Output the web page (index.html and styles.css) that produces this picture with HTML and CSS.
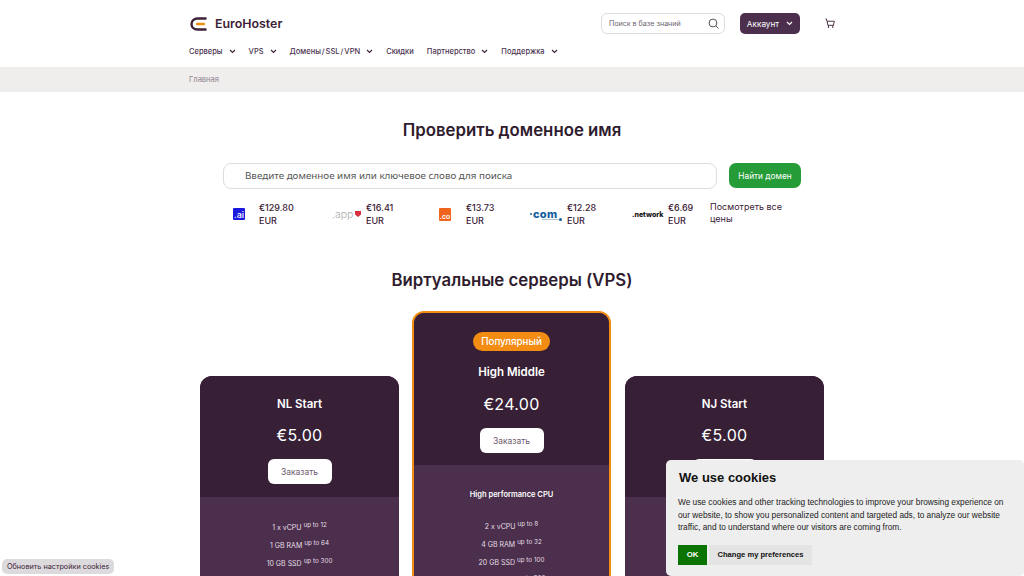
FILE: index.html
```html
<!DOCTYPE html>
<html lang="ru">
<head>
  <meta charset="UTF-8">
  <meta name="viewport" content="width=device-width, initial-scale=1.0">
  <title>EuroHoster</title>
  <link rel="stylesheet" href="styles.css">
</head>
<body>
  <header class="header">
    <div class="top-row">
      <a class="logo">
        <svg class="logo-icon" width="18" height="14" viewBox="0 0 18 14">
          <path d="M16.500 1.500H7.500C4 1.500 1.500 3.800 1.500 7C1.500 10.200 4 12.500 7.500 12.500H16.500" fill="none" stroke="#3c2238" stroke-width="2.400"/>
          <rect x="6" y="5.800" width="9" height="2.500" rx="1" fill="#f28c13"/>
        </svg>
        <span class="logo-text">EuroHoster</span>
      </a>
      <div class="top-actions">
        <div class="kb-search">
          <span>Поиск в базе знаний</span>
          <svg width="11" height="11" viewBox="0 0 11 11" fill="none" stroke="#555" stroke-width="1">
            <circle cx="5" cy="5" r="3.900"/>
            <path d="M8 8l2.500 2.500"/>
          </svg>
        </div>
        <button class="account-btn">Аккаунт
          <svg class="chev" width="7" height="5" viewBox="0 0 7 5" fill="none" stroke="#fff" stroke-width="1.100"><path d="M1 1l2.500 2.500L6 1"/></svg>
        </button>
        <svg class="cart" width="10" height="11" viewBox="0 0 11 11" fill="none" stroke="#3c2238" stroke-width="1">
          <path d="M0.500 0.500H1.500L2.200 3H10.300L9.200 7.500H3.200L2.200 3"/>
          <path d="M3.800 7.500V10.500M8.600 7.500V10.500"/>
        </svg>
      </div>
    </div>
    <nav class="nav">
      <a>Серверы <svg class="chev" width="7" height="5" viewBox="0 0 7 5" fill="none" stroke="#3c2238" stroke-width="1.100"><path d="M1 1l2.500 2.500L6 1"/></svg></a>
      <a>VPS <svg class="chev" width="7" height="5" viewBox="0 0 7 5" fill="none" stroke="#3c2238" stroke-width="1.100"><path d="M1 1l2.500 2.500L6 1"/></svg></a>
      <a>Домены / SSL / VPN <svg class="chev" width="7" height="5" viewBox="0 0 7 5" fill="none" stroke="#3c2238" stroke-width="1.100"><path d="M1 1l2.500 2.500L6 1"/></svg></a>
      <a>Скидки</a>
      <a>Партнерство <svg class="chev" width="7" height="5" viewBox="0 0 7 5" fill="none" stroke="#3c2238" stroke-width="1.100"><path d="M1 1l2.500 2.500L6 1"/></svg></a>
      <a>Поддержка <svg class="chev" width="7" height="5" viewBox="0 0 7 5" fill="none" stroke="#3c2238" stroke-width="1.100"><path d="M1 1l2.500 2.500L6 1"/></svg></a>
    </nav>
  </header>

  <div class="breadcrumb"><div class="breadcrumb-inner">Главная</div></div>

  <section class="domain">
    <h1>Проверить доменное имя</h1>
    <div class="domain-form">
      <div class="domain-input">Введите доменное имя или ключевое слово для поиска</div>
      <button class="domain-btn">Найти домен</button>
    </div>
    <div class="tlds">
      <div class="tld tld-ai">
        <span class="tld-logo"><span class="ai-box">.ai</span></span>
        <span class="tld-price">€129.80<br>EUR</span>
      </div>
      <div class="tld tld-app">
        <span class="tld-logo">
          <span class="app-text">.app</span>
          <svg class="app-mark" width="6" height="6" viewBox="0 0 6 6"><path d="M0 0H6V3.500L3 6L0 3.500Z" fill="#d8303c"/></svg>
        </span>
        <span class="tld-price">€16.41<br>EUR</span>
      </div>
      <div class="tld tld-co">
        <span class="tld-logo"><span class="co-box">.co</span></span>
        <span class="tld-price">€13.73<br>EUR</span>
      </div>
      <div class="tld tld-com">
        <span class="tld-logo com-logo">
          <span class="com-dot"></span>
          <span class="com-text">com</span>
          <span class="com-line"></span>
        </span>
        <span class="tld-price">€12.28<br>EUR</span>
      </div>
      <div class="tld tld-network">
        <span class="tld-logo"><span class="network-text">.network</span></span>
        <span class="tld-price">€6.69<br>EUR</span>
      </div>
      <a class="tld-all">Посмотреть все цены</a>
    </div>
  </section>

  <section class="vps">
    <h2>Виртуальные серверы (VPS)</h2>
    <div class="cards">
      <div class="card">
        <div class="card-head">
          <h3>NL Start</h3>
          <div class="price">€5.00</div>
          <button class="order-btn">Заказать</button>
        </div>
        <div class="card-body">
          <p>1 x vCPU <sup>up to 12</sup></p>
          <p>1 GB RAM <sup>up to 64</sup></p>
          <p>10 GB SSD <sup>up to 300</sup></p>
          <p>1 TB Traffic <sup>up to 300</sup></p>
        </div>
      </div>
      <div class="card card-popular">
        <div class="card-head">
          <span class="badge">Популярный</span>
          <h3>High Middle</h3>
          <div class="price">€24.00</div>
          <button class="order-btn">Заказать</button>
        </div>
        <div class="card-body">
          <p class="card-note">High performance CPU</p>
          <p>2 x vCPU <sup>up to 8</sup></p>
          <p>4 GB RAM <sup>up to 32</sup></p>
          <p>20 GB SSD <sup>up to 100</sup></p>
          <p>1 TB Traffic <sup>up to 300</sup></p>
        </div>
      </div>
      <div class="card">
        <div class="card-head">
          <h3>NJ Start</h3>
          <div class="price">€5.00</div>
          <button class="order-btn">Заказать</button>
        </div>
        <div class="card-body">
          <p>1 x vCPU <sup>up to 12</sup></p>
          <p>1 GB RAM <sup>up to 64</sup></p>
          <p>10 GB SSD <sup>up to 300</sup></p>
          <p>1 TB Traffic <sup>up to 300</sup></p>
        </div>
      </div>
    </div>
  </section>

  <div class="cookie-update">Обновить настройки cookies</div>

  <div class="cookie-box">
    <h4>We use cookies</h4>
    <p>We use cookies and other tracking technologies to improve your browsing experience on our website, to show you personalized content and targeted ads, to analyze our website traffic, and to understand where our visitors are coming from.</p>
    <div class="cookie-actions">
      <button class="cookie-ok">OK</button>
      <button class="cookie-pref">Change my preferences</button>
    </div>
  </div>
</body>
</html>
```

FILE: styles.css
```css
html, body {
  height: 576px;
  overflow: hidden;
}
body {
  margin: 0;
  font-family: Inter, "Noto Sans", sans-serif;
  background-color: #fff;
  color: #3c2238;
}
button {
  font-family: inherit;
  border: none;
  cursor: pointer;
}

.header {
  width: 646px;
  margin: 0 auto;
  height: 67px;
}
.top-row {
  display: flex;
  justify-content: space-between;
  align-items: center;
  height: 47px;
}
.logo {
  display: flex;
  align-items: center;
  gap: 7px;
  margin-left: 1px;
}
.logo-text {
  font-size: 12.400px;
  font-weight: 600;
  color: #3c2238;
}
.top-actions {
  display: flex;
  align-items: center;
}
.kb-search {
  width: 110px;
  height: 19px;
  border: 1px solid #ddd;
  border-radius: 6px;
  display: flex;
  align-items: center;
  justify-content: space-between;
  padding: 0 5px 0 7px;
  margin-right: 15px;
  font-size: 7.100px;
  color: #6c6370;
}
.account-btn {
  width: 60px;
  height: 21px;
  background: #4b2f4c;
  color: #fff;
  border-radius: 5px;
  font-size: 8.200px;
  display: flex;
  align-items: center;
  justify-content: center;
  gap: 7px;
  padding: 0;
}
.cart {
  margin-left: 25px;
}

.nav {
  display: flex;
  align-items: center;
  gap: 13px;
  height: 14px;
  margin-top: -3px;
  font-size: 7.500px;
  font-weight: 500;
  word-spacing: -1px;
  color: #4b3350;
}
.nav a {
  display: flex;
  align-items: center;
  gap: 6px;
}

.breadcrumb {
  background: #efeeec;
  height: 25px;
  display: flex;
  align-items: center;
}
.breadcrumb-inner {
  width: 646px;
  margin: 0 auto;
  font-size: 7.500px;
  color: #8f8390;
}

.domain {
  width: 578px;
  margin: 0 auto;
}
.domain h1 {
  margin: 28px 0 0;
  height: 21px;
  line-height: 21px;
  font-size: 16.800px;
  font-weight: 600;
  text-align: center;
  color: #2f1c2e;
}
.domain-form {
  display: flex;
  gap: 12px;
  margin-top: 22px;
}
.domain-input {
  flex: 1;
  height: 26px;
  box-sizing: border-box;
  border: 1px solid #ddd;
  border-radius: 8px;
  padding-left: 21px;
  line-height: 24px;
  font-family: "Noto Sans", sans-serif;
  font-size: 9.800px;
  color: #555;
}
.domain-btn {
  width: 72px;
  height: 25px;
  background: #259c38;
  color: #fff;
  border-radius: 7px;
  font-size: 8.300px;
  font-weight: 400;
  padding: 0;
}
.tlds {
  display: flex;
  margin-top: 12px;
  height: 26px;
  font-size: 9px;
  font-weight: 500;
  line-height: 13px;
}
.tld {
  display: flex;
  align-items: center;
}
.tld-logo {
  display: flex;
  align-items: center;
  width: 36px;
  box-sizing: border-box;
}
.tld-price {
  white-space: nowrap;
}
.tld-ai { width: 107px; }
.tld-ai .tld-logo { padding-left: 10px; }
.tld-app { width: 100px; }
.tld-app .tld-logo { padding-left: 2px; }
.tld-co { width: 101px; }
.tld-co .tld-logo { padding-left: 9px; }
.tld-com { width: 101px; }
.tld-network { width: 78px; }
.tld-all {
  width: 80px;
  line-height: 12px;
  font-weight: 400;
  align-self: flex-start;
}
.ai-box {
  width: 12px;
  height: 12px;
  background: #1b1be0;
  color: #fff;
  font-size: 9px;
  font-weight: 500;
  line-height: 13px;
  text-align: center;
  border-radius: 1px;
}
.app-text {
  font-size: 10.500px;
  font-weight: 300;
  color: #aaa;
  width: 23px;
}
.co-box {
  width: 12px;
  height: 13px;
  background: #f0641e;
  color: #fff;
  font-size: 7px;
  font-weight: 600;
  line-height: 17px;
  text-align: center;
  border-radius: 1px;
}
.com-logo {
  position: relative;
  margin-left: -1px;
  margin-right: 1px;
}
.com-dot {
  width: 2px;
  height: 2px;
  margin-right: 1px;
  border-radius: 50%;
  background: #14609f;
}
.com-text {
  font-size: 11px;
  font-weight: 800;
  letter-spacing: 0.300px;
  color: #14609f;
}
.com-line {
  position: absolute;
  left: 12px;
  bottom: 1px;
  width: 17px;
  height: 1px;
  background: #b4c6d9;
}
.com-line::after {
  content: "";
  position: absolute;
  right: -3px;
  top: -1px;
  width: 3px;
  height: 3px;
  border-radius: 50%;
  background: #14609f;
}
.network-text {
  font-size: 7px;
  font-weight: 800;
  color: #111;
}

.vps h2 {
  margin: 42px 0 0;
  height: 22px;
  line-height: 22px;
  font-size: 16.800px;
  font-weight: 600;
  text-align: center;
  color: #2f1c2e;
}
.cards {
  display: flex;
  justify-content: center;
  gap: 13px;
  margin-top: 20px;
}
.card {
  width: 199px;
  margin-top: 65px;
  border-radius: 12px;
  overflow: hidden;
  box-sizing: border-box;
  background: #4b2f4c;
  text-align: center;
  color: #fff;
}
.card-popular {
  margin-top: 0;
  margin-right: 1px;
  border: 2px solid #f28c13;
}
.card-head {
  background: #371f35;
  height: 121px;
  padding-top: 21px;
  box-sizing: border-box;
}
.card-popular .card-head {
  height: 152px;
  padding-top: 19px;
}
.badge {
  display: block;
  width: fit-content;
  margin: 0 auto;
  height: 19px;
  line-height: 19px;
  padding: 0 8px;
  border-radius: 10px;
  background: #f28c13;
  font-size: 9.800px;
  font-weight: 500;
}
.card h3 {
  margin: 0;
  font-size: 11.500px;
  font-weight: 600;
  line-height: 15px;
}
.card-popular h3 {
  margin-top: 14px;
}
.price {
  margin-top: 13px;
  font-size: 16px;
  font-weight: 400;
  letter-spacing: 0.300px;
  line-height: 20px;
}
.card-popular .price {
  margin-top: 14px;
}
.order-btn {
  display: block;
  margin: 14px auto 0;
  width: 64px;
  height: 25px;
  background: #fff;
  border-radius: 6px;
  font-size: 8.500px;
  color: #6d5a6c;
  padding: 0;
}
.card-body {
  padding-top: 22px;
  font-size: 7px;
  color: #e6dfe6;
}
.card-popular .card-body {
  padding-top: 21px;
}
.card-body p {
  margin: 0;
  height: 18px;
  line-height: 18px;
}
.card-body sup {
  font-size: 6.300px;
  line-height: 0;
}
.card-body .card-note {
  height: 32px;
  font-size: 7.500px;
  font-weight: 600;
  color: #fff;
}

.cookie-update {
  position: fixed;
  left: 2px;
  bottom: 2px;
  height: 15px;
  line-height: 15px;
  padding: 0 5px;
  border-radius: 5px;
  background: #dcdadc;
  font-size: 7.250px;
}
.cookie-box {
  position: fixed;
  right: 0;
  bottom: 0;
  width: 358px;
  height: 116px;
  box-sizing: border-box;
  padding: 10px 12px;
  background: #eee;
  border-radius: 5px;
  font-family: "Liberation Sans", sans-serif;
  color: #222;
}
.cookie-box h4 {
  margin: 0 0 0 1px;
  font-size: 13px;
  line-height: 16px;
  font-weight: 700;
  color: #111;
}
.cookie-box p {
  margin: 10px 0 0;
  font-size: 8.300px;
  line-height: 12.600px;
}
.cookie-actions {
  display: flex;
  gap: 2px;
  margin-top: 11px;
}
.cookie-ok {
  width: 29px;
  height: 20px;
  background: #0b7400;
  color: #fff;
  font-size: 7.800px;
  font-weight: 700;
  padding: 0;
}
.cookie-pref {
  width: 103px;
  height: 20px;
  background: #e4e4e4;
  color: #111;
  font-size: 7.600px;
  font-weight: 700;
  padding: 0;
}
```
